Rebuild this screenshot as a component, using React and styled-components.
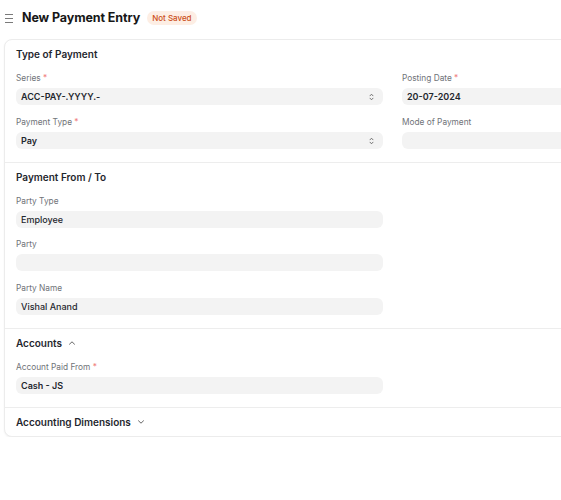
import React from "react";
import styled, { createGlobalStyle } from "styled-components";

const Global = createGlobalStyle`
  html, body { margin: 0; padding: 0; overflow: hidden; background: #fff; }
  body { font-family: Inter, "Noto Sans", sans-serif; color: #1f272e; }
`;

const Page = styled.div`
  padding: 0 0 0 4px;
  width: 900px;
`;

const Header = styled.div`
  display: flex;
  align-items: center;
  height: 35px;
  padding-left: 1px;
  margin-bottom: 4px;
`;

const Burger = styled.span`
  display: flex;
  flex-direction: column;
  justify-content: space-between;
  width: 8px;
  height: 9px;
  margin-right: 9px;
  margin-top: 1px;
  span { display: block; height: 1px; background: #7a7a7a; }
`;

const Title = styled.h1`
  margin: 0;
  font-size: 12.5px;
  font-weight: 700;
  letter-spacing: -0.1px;
  color: #171717;
`;

const Badge = styled.span`
  margin-left: 7px;
  padding: 2px 5px;
  border-radius: 8px;
  background: #fdeee4;
  color: #cc4f18;
  font-size: 8px;
  font-weight: 500;
`;

const Card = styled.div`
  width: 780px;
  border: 1px solid #ececec;
  border-radius: 8px;
  box-shadow: 0 1px 2px rgba(0,0,0,0.06);
  background: #fff;
`;

const Section = styled.section`
  padding: 7px 12px ${p => (p.$last ? "7px" : "9px")} 11px;
  border-top: ${p => (p.$first ? "none" : "1px solid #ededed")};
`;

const Heading = styled.div`
  display: flex;
  align-items: center;
  height: 14px;
  font-size: 10px;
  font-weight: 600;
  color: #1f272e;
  svg { margin-left: 6px; }
`;

const Body = styled.div`
  display: grid;
  grid-template-columns: 367px 367px;
  column-gap: 19px;
  margin-top: 11px;
  padding-bottom: 4px;
`;

const Column = styled.div`
  display: flex;
  flex-direction: column;
  gap: 10.5px;
`;

const Field = styled.div`
  display: flex;
  flex-direction: column;
`;

const Label = styled.div`
  height: 12px;
  line-height: 12px;
  font-size: 8.3px;
  color: #6f7378;
  margin-bottom: 4px;
  span { color: #f08080; }
`;

const Input = styled.div`
  position: relative;
  height: 17px;
  border-radius: 6px;
  background: #f3f3f3;
  padding: 0 5px;
  display: flex;
  align-items: center;
  font-size: 9px;
  font-weight: ${p => (p.$bold ? 600 : 500)};
  color: #1f272e;
`;

const SelectArrows = styled.svg`
  position: absolute;
  right: 9px;
  top: 5px;
`;

const Arrows = () => (
  <SelectArrows width="5" height="8" viewBox="0 0 5 8" fill="none" stroke="#555" strokeWidth="0.8" strokeLinecap="round" strokeLinejoin="round">
    <path d="M1 2.8 L2.5 1.2 L4 2.8" />
    <path d="M1 5.2 L2.5 6.8 L4 5.2" />
  </SelectArrows>
);

const Chevron = ({ up }) => (
  <svg width="8" height="6" viewBox="0 0 8 6" fill="none" stroke="#555" strokeWidth="0.9" strokeLinecap="round" strokeLinejoin="round">
    {up ? <path d="M1.5 4.2 L4 1.8 L6.5 4.2" /> : <path d="M1.5 1.8 L4 4.2 L6.5 1.8" />}
  </svg>
);

const F = ({ label, req, value, bold, select }) => (
  <Field>
    <Label>{label}{req && <span> *</span>}</Label>
    <Input $bold={bold}>
      {value}
      {select && <Arrows />}
    </Input>
  </Field>
);

export default function App() {
  return (
    <>
      <Global />
      <Page>
        <Header>
          <Burger><span /><span /><span /></Burger>
          <Title>New Payment Entry</Title>
          <Badge>Not Saved</Badge>
        </Header>
        <Card>
          <Section $first>
            <Heading>Type of Payment</Heading>
            <Body>
              <Column>
                <F label="Series" req value="ACC-PAY-.YYYY.-" bold select />
                <F label="Payment Type" req value="Pay" bold select />
              </Column>
              <Column>
                <F label="Posting Date" req value="20-07-2024" bold />
                <F label="Mode of Payment" value="" />
              </Column>
            </Body>
          </Section>
          <Section>
            <Heading>Payment From / To</Heading>
            <Body>
              <Column>
                <F label="Party Type" value="Employee" />
                <F label="Party" value="" />
                <F label="Party Name" value="Vishal Anand" />
              </Column>
              <Column />
            </Body>
          </Section>
          <Section>
            <Heading>Accounts<Chevron up /></Heading>
            <Body>
              <Column>
                <F label="Account Paid From" req value="Cash - JS" bold />
              </Column>
              <Column />
            </Body>
          </Section>
          <Section $last>
            <Heading>Accounting Dimensions<Chevron /></Heading>
          </Section>
        </Card>
      </Page>
    </>
  );
}
